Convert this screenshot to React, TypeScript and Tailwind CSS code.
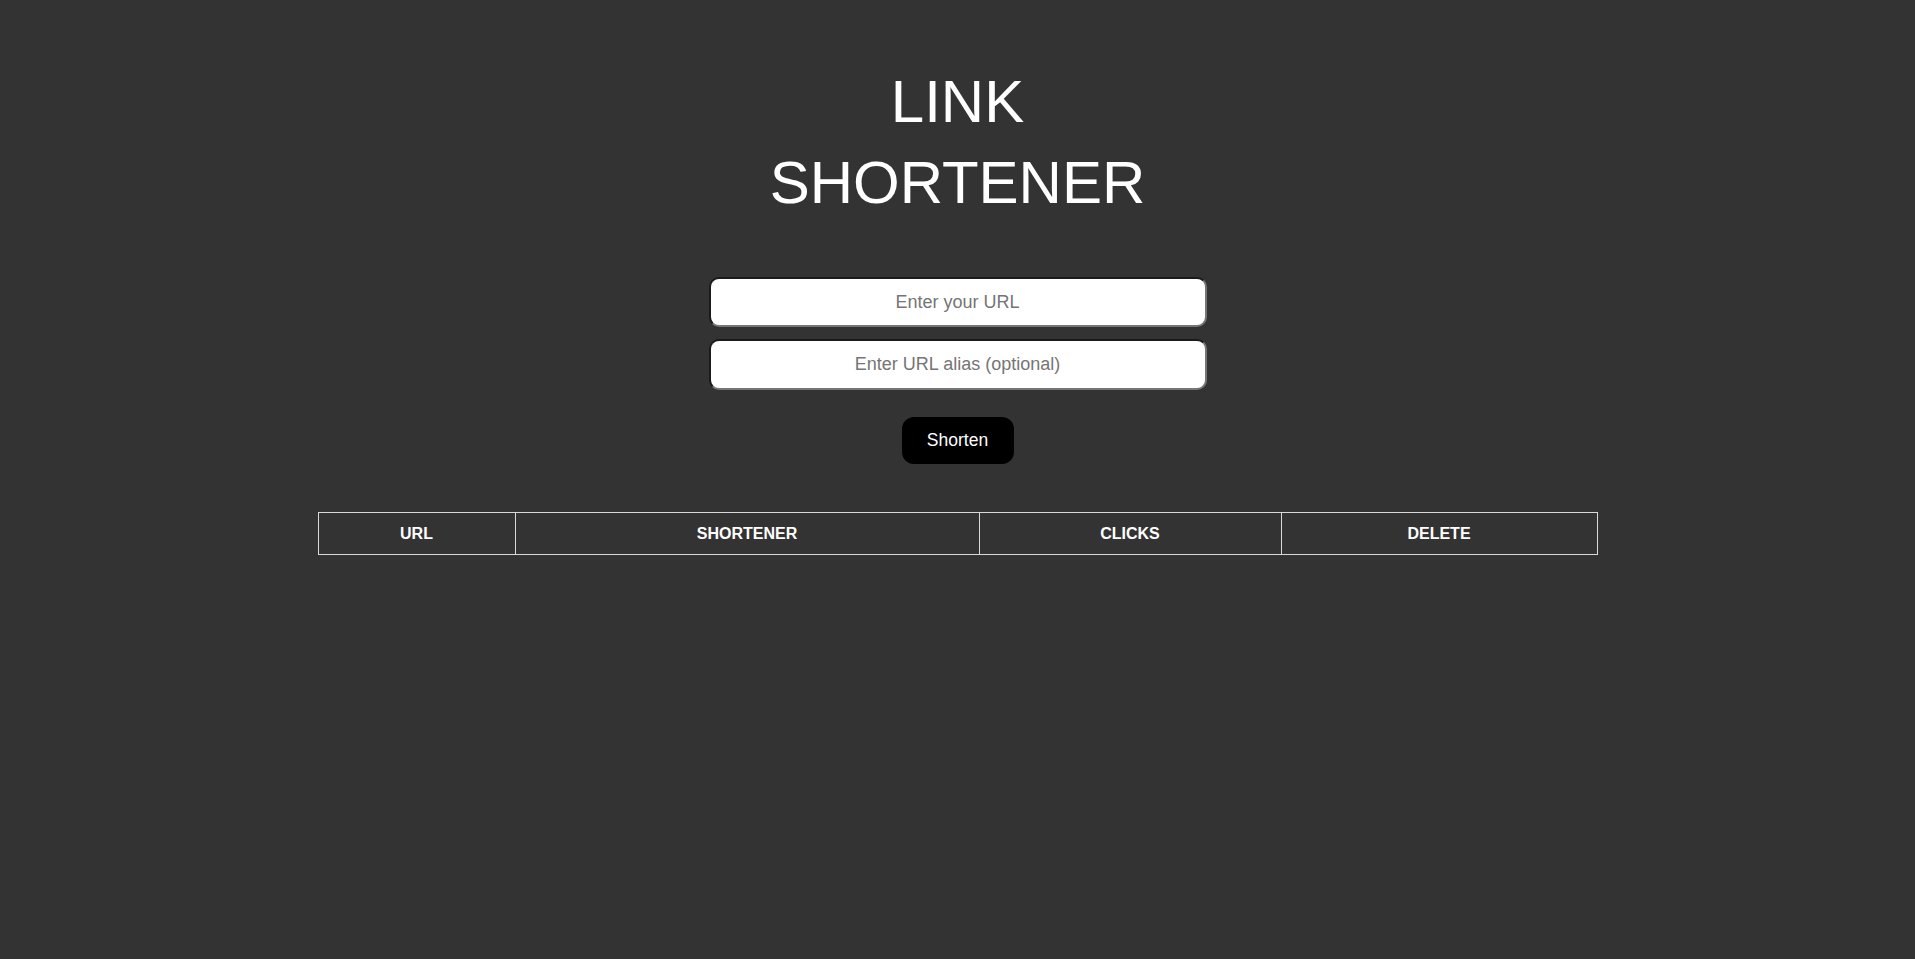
import { useState } from "react"

const columns = [
  { label: "URL", width: "w-[197px]" },
  { label: "SHORTENER", width: "w-[464px]" },
  { label: "CLICKS", width: "w-[302px]" },
  { label: "DELETE", width: "w-[316px]" },
]

export default function App() {
  const [url, setUrl] = useState("")
  const [alias, setAlias] = useState("")

  return (
    <div className="min-h-screen w-full bg-[#333333] font-['Liberation_Sans',Arial,sans-serif] text-white flex flex-col items-center pt-[61px]">
      <h1 className="text-[60px] leading-[81px] text-center font-normal">
        LINK
        <br />
        SHORTENER
      </h1>

      <form
        className="mt-[54px] flex flex-col items-center"
        onSubmit={(e) => e.preventDefault()}
      >
        <input
          value={url}
          onChange={(e) => setUrl(e.target.value)}
          placeholder="Enter your URL"
          className="w-[498px] h-[50px] rounded-[10px] bg-white text-black text-center text-[18px] placeholder:text-[#757575] outline-none border-2 border-t-[#1a1a1a] border-l-[#1a1a1a] border-b-[#767676] border-r-[#767676]"
        />
        <input
          value={alias}
          onChange={(e) => setAlias(e.target.value)}
          placeholder="Enter URL alias (optional)"
          className="mt-[12px] w-[498px] h-[51px] rounded-[10px] bg-white text-black text-center text-[18px] placeholder:text-[#757575] outline-none border-2 border-t-[#1a1a1a] border-l-[#1a1a1a] border-b-[#767676] border-r-[#767676]"
        />
        <button
          type="submit"
          className="mt-[27px] w-[112px] h-[47px] rounded-[12px] bg-black text-white text-[17.5px]"
        >
          Shorten
        </button>
      </form>

      <table className="mt-[48px] border-collapse w-[1279px] table-fixed">
        <thead>
          <tr>
            {columns.map((c) => (
              <th
                key={c.label}
                className={`${c.width} h-[42px] border border-[#d9d9d9] text-[16px] font-bold text-white text-center`}
              >
                {c.label}
              </th>
            ))}
          </tr>
        </thead>
        <tbody />
      </table>
    </div>
  )
}
